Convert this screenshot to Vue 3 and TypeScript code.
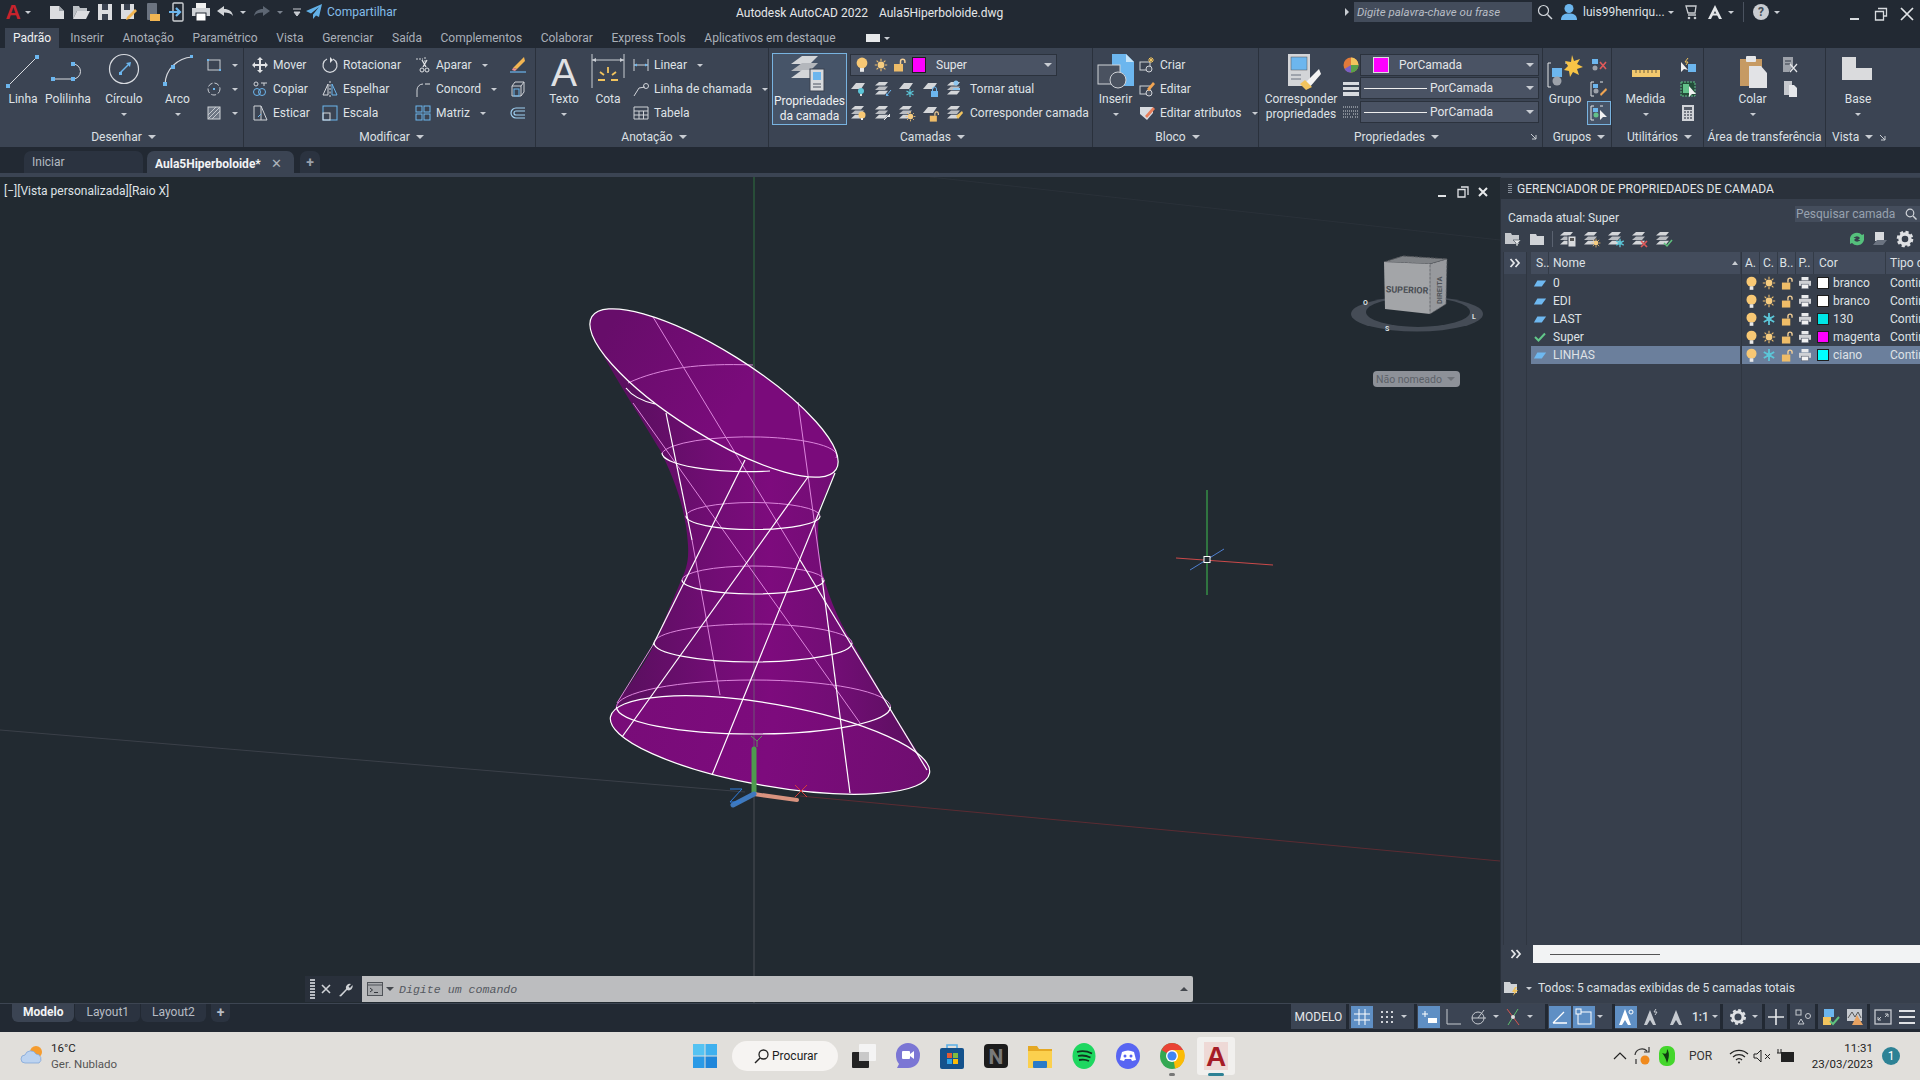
<script setup lang="ts">
const ribbonTabs = ['Inserir', 'Anotação', 'Paramétrico', 'Vista', 'Gerenciar', 'Saída', 'Complementos', 'Colaborar', 'Express Tools', 'Aplicativos em destaque']

const layers = [
  { name: '0', ok: false, frozen: false, color: '#ffffff', colorName: 'branco', active: false },
  { name: 'EDI', ok: false, frozen: false, color: '#ffffff', colorName: 'branco', active: false },
  { name: 'LAST', ok: false, frozen: true, color: '#00e6e6', colorName: '130', active: false },
  { name: 'Super', ok: true, frozen: false, color: '#ff00ff', colorName: 'magenta', active: false },
  { name: 'LINHAS', ok: false, frozen: true, color: '#00ffff', colorName: 'ciano', active: true },
]

interface Ring { cx: number; cy: number; rx: number; ry: number }
const rings: Ring[] = [
  { cx: 753.5, cy: 707, rx: 137, ry: 27 },
  { cx: 753, cy: 643, rx: 99, ry: 19 },
  { cx: 753, cy: 580, rx: 71, ry: 14 },
  { cx: 753, cy: 516, rx: 67, ry: 13.5 },
]
const upper = (r: Ring) => `M${r.cx - r.rx},${r.cy} A${r.rx},${r.ry} 0 0 1 ${r.cx + r.rx},${r.cy}`
const lower = (r: Ring) => `M${r.cx - r.rx},${r.cy} A${r.rx},${r.ry} 0 0 0 ${r.cx + r.rx},${r.cy}`

const rulingsPink = [
  [798, 402, 822, 578], [692, 540, 720, 695], [653, 645, 617, 703], [633, 403, 860, 723], [653, 317, 800, 560],
]
const rulingsWhite = [
  [822, 578, 850, 793], [712, 775, 835, 473], [622, 737, 808, 477], [745, 460, 653, 645], [666, 413, 692, 540], [800, 560, 927, 770],
]
</script>

<template>
  <svg class="sprite">
    <symbol id="sheets" viewBox="0 0 18 18">
      <path d="M5 2h9l-3 3.6H1z" fill="#d4d6d9" /><path d="M5 6.4h9l-3 3.6H1z" fill="#b9bcc1" /><path d="M5 10.8h9l-3 3.6H1z" fill="#d4d6d9" />
    </symbol>
    <symbol id="sheet" viewBox="0 0 18 18"><path d="M6 3h9l-4 6H1z" fill="#d4d6d9" /></symbol>
    <symbol id="bulb" viewBox="0 0 14 16">
      <circle cx="7" cy="6" r="5.4" fill="#f8c874" /><rect x="5" y="11" width="4" height="3.8" fill="#e8e8e8" />
    </symbol>
    <symbol id="sun" viewBox="0 0 14 14">
      <circle cx="7" cy="7" r="3.4" fill="#f6cc80" />
      <path d="M7 .8v2.2M7 11v2.2M.8 7H3M11 7h2.2M2.6 2.6l1.6 1.6M9.8 9.8l1.6 1.6M11.4 2.6 9.8 4.2M4.2 9.8l-1.6 1.6" stroke="#f0c070" stroke-width="1.1" />
    </symbol>
    <symbol id="lock" viewBox="0 0 14 14">
      <rect x="1" y="6" width="9" height="7.500" fill="#eebc68" /><path d="M7.500 6V3.400a2.200 2.200 0 0 1 4.400 0V5" fill="none" stroke="#f3cf96" stroke-width="1.500" />
    </symbol>
    <symbol id="printer" viewBox="0 0 14 14">
      <rect x="3.5" y="1" width="7" height="3.4" fill="#e9eaec" /><rect x="1" y="4.8" width="12" height="5" fill="#cfd1d5" /><rect x="3.5" y="8.2" width="7" height="4.6" fill="#f1f1f2" stroke="#5a6270" stroke-width=".6" />
    </symbol>
    <symbol id="para" viewBox="0 0 16 10"><path d="M5 1.5h10l-5 7H1z" fill="#6eb8f0" /></symbol>
    <symbol id="snow" viewBox="0 0 14 14">
      <path d="M7 1v12M1.800 4l10.400 6M12.200 4 1.800 10" stroke="#5cc6d8" stroke-width="1.800" /><circle cx="7" cy="7" r="2.400" fill="#5cc6d8" />
    </symbol>
    <symbol id="chev" viewBox="0 0 12 10"><path d="M1.500 1 5 5 1.500 9M6.500 1 10 5 6.500 9" fill="none" stroke="#e4e6e9" stroke-width="1.800" /></symbol>
  </svg>

  <div class="app">
    <!-- barra de titulo -->
    <header class="titlebar">
      <div class="qat">
        <span class="logo">A</span>
        <i class="caret qat-caret"></i>
        <div class="qat-icons">
          <svg width="24" height="24" viewBox="0 0 24 24"><path d="M5 6h9l5 5v8H5z" fill="#dcdde0" /><path d="M14 6l5 5h-5z" fill="#9ea3aa" /></svg>
          <svg width="24" height="24" viewBox="0 0 24 24"><path d="M4 6h6l1 2h7v3H8l-4 8z" fill="#bcc0c5" /><path d="M8 11h13l-4 8H4z" fill="#dcdde0" /></svg>
          <svg width="24" height="24" viewBox="0 0 24 24"><path d="M5 4h14v16H5z" fill="#dcdde0" /><rect x="9" y="4" width="6" height="6" fill="#3a4250" /><rect x="9" y="14" width="6" height="6" fill="#3a4250" /></svg>
          <svg width="24" height="24" viewBox="0 0 24 24"><path d="M4 4h13v15H4z" fill="#dcdde0" /><rect x="7" y="4" width="6" height="6" fill="#3a4250" /><path d="M20 11l-8 8-3 1 1-3 8-8z" fill="#f2b552" /></svg>
          <svg width="24" height="24" viewBox="0 0 24 24"><rect x="6" y="3" width="10" height="17" rx="1" fill="#6b7380" /><rect x="9" y="14" width="10" height="7" fill="#f2b552" /></svg>
          <svg width="24" height="24" viewBox="0 0 24 24"><rect x="8" y="3" width="10" height="18" rx="1" fill="none" stroke="#cdd0d4" stroke-width="1.400" /><path d="M4 12h10M11 8l4 4-4 4" fill="none" stroke="#6cb6ee" stroke-width="2.200" /></svg>
          <svg width="24" height="24" viewBox="0 0 24 24"><rect x="7" y="3" width="10" height="5" fill="#f0f0f0" /><rect x="3" y="8" width="18" height="8" fill="#cfd2d6" /><rect x="7" y="13" width="10" height="8" fill="#fff" stroke="#222933" /></svg>
          <svg width="24" height="24" viewBox="0 0 24 24"><path d="M4 11l7-5v3c5 0 8 2 9 7-2-3-5-3.500-9-3.500V16z" fill="#d2d5d9" /></svg>
          <i class="caret"></i>
          <svg class="redo" width="24" height="24" viewBox="0 0 24 24"><path d="M20 11l-7-5v3c-5 0-8 2-9 7 2-3 5-3.500 9-3.500V16z" fill="#5d6673" /></svg>
          <i class="caret dim"></i>
          <svg class="qat-menu" width="12" height="12" viewBox="0 0 12 12"><path d="M2 3h8M3 6h6l-3 4z" stroke="#c8ccd2" fill="#c8ccd2" /></svg>
        </div>
        <svg class="share" width="18" height="18" viewBox="0 0 18 18"><path d="M17 1 1 8l5 2.500L14 4l-6 7.500V16l3-3.500 3 1.500z" fill="#62b1e8" /></svg>
        <span class="share-text">Compartilhar</span>
      </div>
      <div class="doc-title"><span>Autodesk AutoCAD 2022</span><span>Aula5Hiperboloide.dwg</span></div>
      <div class="title-right">
        <i class="caret side"></i>
        <div class="search-box">Digite palavra-chave ou frase</div>
        <svg width="16" height="16" viewBox="0 0 16 16"><circle cx="6.500" cy="6.500" r="5" fill="none" stroke="#d2d6db" stroke-width="1.200" /><path d="M10.500 10.500 15 15" stroke="#d2d6db" stroke-width="1.500" /></svg>
        <svg width="18" height="18" viewBox="0 0 18 18"><circle cx="9" cy="5.500" r="4.500" fill="#6cb6ee" /><path d="M1 17c0-5 3-6.500 8-6.500s8 1.500 8 6.500z" fill="#6cb6ee" /></svg>
        <span class="user">luis99henriqu...</span>
        <i class="caret"></i>
        <svg class="cart" width="14" height="16" viewBox="0 0 14 16"><path d="M1 2h10l-1 7H3zM3 11h8" fill="none" stroke="#c9ccd1" stroke-width="1.300" /><circle cx="4" cy="14" r="1.300" fill="#c9ccd1" /><circle cx="10" cy="14" r="1.300" fill="#c9ccd1" /></svg>
        <svg width="16" height="16" viewBox="0 0 16 16"><path d="M8 1 1 15h3l4-8 4 8h3z" fill="#e3e5e8" /><rect x="4" y="9.500" width="8" height="2" fill="#e3e5e8" /></svg>
        <i class="caret"></i>
        <b class="sep"></b>
        <span class="help">?</span>
        <i class="caret"></i>
        <div class="win-btns">
          <svg width="14" height="14" viewBox="0 0 14 14"><path d="M2 12h9" stroke="#d8dbdf" stroke-width="2" /></svg>
          <svg width="14" height="14" viewBox="0 0 14 14"><path d="M4 1.500h8.500V9H9.500M1.500 4.500h8V13h-8z" fill="none" stroke="#d8dbdf" stroke-width="1.300" /></svg>
          <svg width="14" height="14" viewBox="0 0 14 14"><path d="m1 1 12 12M13 1 1 13" stroke="#e1e4e7" stroke-width="1.700" /></svg>
        </div>
      </div>
    </header>

    <!-- abas da faixa de opcoes -->
    <nav class="ribbon-tabs">
      <span class="rtab active">Padrão</span>
      <span v-for="t in ribbonTabs" :key="t" class="rtab">{{ t }}</span>
      <span class="rtab-pick"><b></b><i class="caret"></i></span>
    </nav>

    <!-- faixa de opcoes -->
    <section class="ribbon">
      <div class="panel p-draw">
        <div class="panel-body">
          <div class="big">
            <svg width="40" height="38" viewBox="0 0 40 38"><path d="M5 33 34 4" stroke="#d8dbe0" /><rect x="3" y="31" width="4" height="4" fill="#6cb6ee" /><rect x="32" y="2" width="4" height="4" fill="#6cb6ee" /></svg>
            <span>Linha</span>
          </div>
          <div class="big">
            <svg width="40" height="38" viewBox="0 0 40 38"><path d="M5 26h20a7.500 7.500 0 0 0 0-15" fill="none" stroke="#d8dbe0" /><rect x="3" y="24" width="4" height="4" fill="#6cb6ee" /><rect x="23" y="24" width="4" height="4" fill="#6cb6ee" /><rect x="23" y="9" width="4" height="4" fill="#6cb6ee" /></svg>
            <span>Polilinha</span>
          </div>
          <div class="big">
            <svg width="40" height="38" viewBox="0 0 40 38"><circle cx="20" cy="16" r="14.500" fill="none" stroke="#d8dbe0" stroke-width="1.200" /><path d="M16 20l8-8" stroke="#6cb6ee" stroke-width="1.500" /><rect x="15" y="19" width="3" height="3" fill="#6cb6ee" /><path d="M27 9l-5 1 4 4z" fill="#6cb6ee" /></svg>
            <span>Círculo</span>
            <i class="caret"></i>
          </div>
          <div class="big">
            <svg width="40" height="38" viewBox="0 0 40 38"><path d="M7 32C7 16 20 5 34 4" fill="none" stroke="#d8dbe0" stroke-width="1.200" /><rect x="5" y="29" width="4" height="4" fill="#6cb6ee" /><rect x="13" y="12" width="4" height="4" fill="#6cb6ee" /><rect x="32" y="2" width="3" height="3" fill="#6cb6ee" /></svg>
            <span>Arco</span>
            <i class="caret"></i>
          </div>
          <div class="col draw-small">
            <div class="tool"><svg width="18" height="18" viewBox="0 0 18 18"><rect x="3" y="4" width="12" height="10" fill="none" stroke="#c9cdd3" /><rect x="2" y="3" width="2" height="2" fill="#6cb6ee" /><rect x="14" y="13" width="2" height="2" fill="#6cb6ee" /></svg><i class="caret"></i></div>
            <div class="tool"><svg width="18" height="18" viewBox="0 0 18 18"><circle cx="9" cy="9" r="6" fill="none" stroke="#c9cdd3" stroke-dasharray="5 2" /><rect x="8" y="8" width="2" height="2" fill="#6cb6ee" /></svg><i class="caret"></i></div>
            <div class="tool"><svg width="18" height="18" viewBox="0 0 18 18"><rect x="3" y="3" width="12" height="12" fill="#6d7684" stroke="#d0d3d8" /><path d="M3 11l8-8M3 15 15 3M7 15l8-8" stroke="#c6cad0" /></svg><i class="caret"></i></div>
          </div>
        </div>
        <div class="panel-title">Desenhar <i class="caret"></i></div>
      </div>

      <div class="panel p-mod">
        <div class="panel-body">
          <div class="col">
            <div class="tool"><svg width="18" height="18" viewBox="0 0 18 18"><path d="M9 1l3 3H10v4h4V6l3 3-3 3v-2h-4v4h2l-3 3-3-3h2v-4H4v2L1 9l3-3v2h4V4H6z" fill="#e1e3e6" /></svg>Mover</div>
            <div class="tool"><svg width="18" height="18" viewBox="0 0 18 18"><circle cx="6" cy="12" r="3.500" fill="none" stroke="#6cb6ee" /><circle cx="11" cy="12" r="3.500" fill="none" stroke="#6cb6ee" /><circle cx="5" cy="4" r="2" fill="none" stroke="#d0d3d8" /><path d="M10 3h6M13 6V3" stroke="#d0d3d8" /></svg>Copiar</div>
            <div class="tool"><svg width="18" height="18" viewBox="0 0 18 18"><path d="M3 2h7v14H3zM10 2l6 14H10" fill="none" stroke="#d0d3d8" /><path d="M7 13l3-3" stroke="#6cb6ee" /></svg>Esticar</div>
          </div>
          <div class="col">
            <div class="tool"><svg width="18" height="18" viewBox="0 0 18 18"><path d="M12 3a7 7 0 1 1-6 0" fill="none" stroke="#d8dbe0" stroke-width="1.200" /><path d="M9 1v6l3-3z" fill="#e1e3e6" /></svg>Rotacionar</div>
            <div class="tool"><svg width="18" height="18" viewBox="0 0 18 18"><path d="M9 1v16" stroke="#d8dbe0" stroke-dasharray="2 1.500" /><path d="M7 4 2 15h5z" fill="none" stroke="#d8dbe0" /><path d="M11 4l5 11h-5z" fill="none" stroke="#6cb6ee" /></svg>Espelhar</div>
            <div class="tool"><svg width="18" height="18" viewBox="0 0 18 18"><rect x="2" y="2" width="14" height="14" fill="none" stroke="#6cb6ee" /><rect x="2" y="9" width="7" height="7" fill="none" stroke="#d8dbe0" /></svg>Escala</div>
          </div>
          <div class="col">
            <div class="tool"><svg width="18" height="18" viewBox="0 0 18 18"><path d="M2 3h7M11 1v5" stroke="#d0d3d8" stroke-dasharray="2 1" /><path d="M8 4l4 7M13 4l-4 7" stroke="#e1e3e6" stroke-width="1.300" /><circle cx="8" cy="14" r="2" fill="none" stroke="#e1e3e6" /><circle cx="13" cy="14" r="2" fill="none" stroke="#e1e3e6" /></svg>Aparar <i class="caret"></i></div>
            <div class="tool"><svg width="18" height="18" viewBox="0 0 18 18"><path d="M3 17V10a6 6 0 0 1 6-6" fill="none" stroke="#d0d3d8" /><path d="M11 4h5" stroke="#e1e3e6" /></svg>Concord <i class="caret"></i></div>
            <div class="tool"><svg width="18" height="18" viewBox="0 0 18 18"><rect x="2" y="2" width="6" height="6" fill="none" stroke="#6cb6ee" /><rect x="10" y="2" width="6" height="6" fill="none" stroke="#6cb6ee" /><rect x="2" y="10" width="6" height="6" fill="none" stroke="#6cb6ee" /><rect x="10" y="10" width="6" height="6" fill="none" stroke="#6cb6ee" /></svg>Matriz <i class="caret"></i></div>
          </div>
          <div class="col">
            <div class="tool"><svg width="18" height="18" viewBox="0 0 18 18"><path d="M15 1l1 4-8 8-4-1z" fill="#f2b552" /><path d="M4 12l4 1-2 2-3-1z" fill="#ef8f8f" /><path d="M1 16h16" stroke="#6cb6ee" stroke-width="1.200" /></svg></div>
            <div class="tool"><svg width="18" height="18" viewBox="0 0 18 18"><path d="M3 6h9v10H3zM3 6l3-4h9v10l-3 4M12 6l3-4" fill="none" stroke="#d0d3d8" /><rect x="5" y="9" width="5" height="7" fill="none" stroke="#6cb6ee" /></svg></div>
            <div class="tool"><svg width="18" height="18" viewBox="0 0 18 18"><path d="M16 4H7a5 5 0 0 0 0 10h9M16 7H7a2 2 0 0 0 0 4h9" fill="none" stroke="#9fd0f2" stroke-width="1.200" /></svg></div>
          </div>
        </div>
        <div class="panel-title">Modificar <i class="caret"></i></div>
      </div>

      <div class="panel p-annot">
        <div class="panel-body">
          <div class="big">
            <svg width="40" height="38" viewBox="0 0 40 38"><text x="20" y="33" text-anchor="middle" font-family="Liberation Sans" font-size="39" fill="#e0e1e3">A</text></svg>
            <span>Texto</span>
            <i class="caret"></i>
          </div>
          <div class="big">
            <svg width="34" height="38" viewBox="0 0 34 38"><path d="M1 1v34M33 1v24M1 7h32" stroke="#c9cdd3" /><path d="M1 7l4-2v4zM33 7l-4-2v4z" fill="#c9cdd3" /><path d="M17 14v6M9 19l4 3M25 19l-4 3M7 27h7M20 27h7" stroke="#f2c45e" stroke-width="1.800" /></svg>
            <span>Cota</span>
          </div>
          <div class="col">
            <div class="tool"><svg width="18" height="18" viewBox="0 0 18 18"><path d="M2 3v12M16 3v12M2 9h14" stroke="#d0d3d8" /><path d="M2 9l3-1.500v3zM16 9l-3-1.500v3z" fill="#6cb6ee" /></svg>Linear <i class="caret"></i></div>
            <div class="tool"><svg width="18" height="18" viewBox="0 0 18 18"><path d="M2 16l5-8 6-1" fill="none" stroke="#d0d3d8" /><circle cx="14" cy="6" r="2.500" fill="none" stroke="#d0d3d8" /></svg>Linha de chamada <i class="caret"></i></div>
            <div class="tool"><svg width="18" height="18" viewBox="0 0 18 18"><path d="M2 3h14v12H2zM2 7h14M2 11h14M7 7v8M11.500 7v8" fill="none" stroke="#d0d3d8" /></svg>Tabela</div>
          </div>
        </div>
        <div class="panel-title">Anotação <i class="caret"></i></div>
      </div>

      <div class="panel p-layer">
        <div class="panel-body">
          <div class="big layer-btn">
            <svg width="40" height="38" viewBox="0 0 40 38"><path d="M12 1h16l-8 8H1z" fill="#d4d6d9" /><path d="M12 8h16l-8 8H1z" fill="#b4b7bc" /><path d="M12 15h16l-8 8H1z" fill="#d4d6d9" /><rect x="20" y="14" width="14" height="22" fill="#d8dadd" stroke="#3a4250" /><rect x="23" y="17" width="8" height="8" fill="#6cb6ee" /><path d="M23 29h8M23 32h8" stroke="#4a5260" /></svg>
            <span>Propriedades<br />da camada</span>
          </div>
          <div class="col layer-col">
            <div class="combo layer-combo">
              <svg width="14" height="16"><use href="#bulb" /></svg>
              <svg width="14" height="14"><use href="#sun" /></svg>
              <svg width="14" height="14"><use href="#lock" /></svg>
              <b class="swatch" style="background:#ff00ff"></b>
              <span>Super</span>
              <i class="caret combo-caret"></i>
            </div>
            <div class="tool layer-row">
              <svg width="18" height="18" viewBox="0 0 18 18"><use href="#sheet" width="18" height="18" /><circle cx="11" cy="11" r="3" fill="#5cc6d8" /><rect x="10" y="14" width="2" height="2" fill="#ddd" /></svg>
              <svg width="18" height="18" viewBox="0 0 18 18"><use href="#sheets" width="18" height="18" /><path d="M17 10l-5 6" stroke="#6cb6ee" /><path d="M12 13v3h3z" fill="#6cb6ee" /></svg>
              <svg width="18" height="18" viewBox="0 0 18 18"><use href="#sheet" width="18" height="18" /><path d="M12 9v8M8.500 11l7 4M15.500 11l-7 4" stroke="#5cc6d8" stroke-width="1.200" /></svg>
              <svg width="18" height="18" viewBox="0 0 18 18"><use href="#sheet" width="18" height="18" /><rect x="9" y="11" width="7" height="6" fill="#6cb6ee" /><path d="M10.500 11V9a2 2 0 0 1 4 0v2" fill="none" stroke="#6cb6ee" /></svg>
              <svg width="18" height="18" viewBox="0 0 18 18"><use href="#sheets" width="18" height="18" /><circle cx="10" cy="3" r="2.500" fill="#8ec6f0" /><path d="M7 9h7" stroke="#8ec6f0" stroke-width="2" /></svg>
              Tornar atual
            </div>
            <div class="tool layer-row">
              <svg width="18" height="18" viewBox="0 0 18 18"><use href="#sheets" width="18" height="18" /><circle cx="12" cy="11" r="3.500" fill="#f8c874" /><rect x="11" y="14" width="2" height="2" fill="#eee" /></svg>
              <svg width="18" height="18" viewBox="0 0 18 18"><use href="#sheets" width="18" height="18" /><path d="M10 16l6-6" stroke="#e6e8ea" /><path d="M16 10v3h-3z" fill="#e6e8ea" /></svg>
              <svg width="18" height="18" viewBox="0 0 18 18"><use href="#sheets" width="18" height="18" /><use href="#sun" x="7" y="7" width="11" height="11" /></svg>
              <svg width="18" height="18" viewBox="0 0 18 18"><use href="#sheet" width="18" height="18" /><use href="#lock" x="7" y="7" width="11" height="11" /></svg>
              <svg width="18" height="18" viewBox="0 0 18 18"><use href="#sheets" width="18" height="18" /><path d="M10 12l6-5 1 2-5 6z" fill="#f2c45e" /></svg>
              Corresponder camada
            </div>
          </div>
        </div>
        <div class="panel-title">Camadas <i class="caret"></i></div>
      </div>

      <div class="panel p-block">
        <div class="panel-body">
          <div class="big">
            <svg width="40" height="38" viewBox="0 0 40 38"><path d="M16 1h14l8 8v24H16z" fill="#6cb6ee" /><path d="M30 1l8 8h-8z" fill="#c6e4f8" /><rect x="2" y="12" width="22" height="19" fill="#4a5260" stroke="#d0d3d8" /><circle cx="22" cy="27" r="8" fill="#4a5260" stroke="#d0d3d8" /></svg>
            <span>Inserir</span>
            <i class="caret"></i>
          </div>
          <div class="col">
            <div class="tool"><svg width="18" height="18" viewBox="0 0 18 18"><rect x="2" y="6" width="10" height="8" fill="none" stroke="#d0d3d8" /><circle cx="11" cy="13" r="3" fill="#4a5260" stroke="#d0d3d8" /><path d="M13 1v6M10 4h6M11 2l4 4M15 2l-4 4" stroke="#f2c45e" /></svg>Criar</div>
            <div class="tool"><svg width="18" height="18" viewBox="0 0 18 18"><rect x="2" y="6" width="10" height="8" fill="none" stroke="#d0d3d8" /><circle cx="11" cy="13" r="3" fill="#4a5260" stroke="#d0d3d8" /><path d="M9 9l6-7 2 2-6 7z" fill="#f2a552" /></svg>Editar</div>
            <div class="tool"><svg width="18" height="18" viewBox="0 0 18 18"><path d="M2 3h13v6l-6 7-7-6z" fill="#d8dbe0" /><path d="M7 12l8-9 2 2-8 9z" fill="#e87e5a" /></svg>Editar atributos <i class="caret"></i></div>
          </div>
        </div>
        <div class="panel-title">Bloco <i class="caret"></i></div>
      </div>

      <div class="panel p-props">
        <div class="panel-body">
          <div class="big">
            <svg width="40" height="38" viewBox="0 0 40 38"><rect x="7" y="1" width="22" height="32" fill="#d3d5d8" /><rect x="10" y="4" width="16" height="13" fill="#6cb6ee" stroke="#555" stroke-width=".5" /><path d="M10 22h10M10 26h10" stroke="#6a7280" /><path d="M38 16 24 30l4 5 12-14z" fill="#f4f4f4" /><path d="M24 27l7 7-6 3-6-6z" fill="#f2c45e" /></svg>
            <span>Corresponder<br />propriedades</span>
          </div>
          <div class="col prop-icons">
            <div class="tool"><svg width="16" height="18" viewBox="0 0 16 18"><circle cx="8" cy="9" r="7.500" fill="#e07a3a" /><path d="M8 9V1.500a7.500 7.500 0 0 1 7.500 7.500z" fill="#f2c45e" /><path d="M8 9h7.500A7.500 7.500 0 0 1 8 16.500z" fill="#58a14a" /><path d="M8 9v7.500A7.500 7.500 0 0 1 1.500 13z" fill="#7a5fc6" /></svg></div>
            <div class="tool"><svg width="16" height="18" viewBox="0 0 16 18"><path d="M0 2h16v3H0zM0 7h16v3H0zM0 12h16v4H0z" fill="#d8dbdf" /></svg></div>
            <div class="tool"><svg width="16" height="18" viewBox="0 0 16 18"><path d="M0 3h16M0 7h16M0 10h8M10 10h6M0 13h5M7 13h3M12 13h4" stroke="#d0d3d8" stroke-dasharray="1 1" /></svg></div>
          </div>
          <div class="col prop-combos">
            <div class="combo"><b class="swatch big-swatch"></b><span>PorCamada</span><i class="caret combo-caret"></i></div>
            <div class="combo"><b class="rule"></b><span>PorCamada</span><i class="caret combo-caret"></i></div>
            <div class="combo"><b class="rule"></b><span>PorCamada</span><i class="caret combo-caret"></i></div>
          </div>
        </div>
        <div class="panel-title title-props">Propriedades <i class="caret"></i><svg class="expand" width="7" height="7" viewBox="0 0 7 7"><path d="M1 1l5 5M6 2v4H2" fill="none" stroke="#c9cdd3" /></svg></div>
      </div>

      <div class="panel p-group">
        <div class="panel-body">
          <div class="big">
            <svg width="40" height="38" viewBox="0 0 40 38"><path d="M6 10H3v24h3M20 10h3" fill="none" stroke="#e1e3e6" /><rect x="7" y="15" width="10" height="9" fill="#6cb6ee" /><circle cx="12" cy="28" r="4.500" fill="#9da2aa" /><path d="M27 2l2 6 6-2-3 5 6 3-6 2 2 6-6-3-3 5-1-6-5-1 4-4-3-5 6 1z" fill="#f8c446" /></svg>
            <span>Grupo</span>
          </div>
          <div class="col">
            <div class="tool"><svg width="18" height="18" viewBox="0 0 18 18"><rect x="2" y="3" width="6" height="5" fill="#6cb6ee" /><circle cx="5" cy="12" r="2.500" fill="#9da2aa" /><path d="M10 6l6 7M16 6l-6 7" stroke="#e05a5a" stroke-width="1.600" /></svg></div>
            <div class="tool"><svg width="18" height="18" viewBox="0 0 18 18"><path d="M4 2H1v14h3M10 2h3" fill="none" stroke="#e1e3e6" /><rect x="3" y="4" width="5" height="4" fill="#6cb6ee" /><circle cx="6" cy="11" r="2.500" fill="#9da2aa" /><path d="M10 14l6-6 1 2-6 6z" fill="#f2a552" /></svg></div>
            <div class="tool boxed"><svg width="18" height="18" viewBox="0 0 18 18"><path d="M4 2H1v14h3M10 2h3" fill="none" stroke="#e1e3e6" /><rect x="3" y="4" width="5" height="4" fill="#6cb6ee" /><circle cx="6" cy="11" r="2.500" fill="#63c18a" /><path d="M10 6v10l3-3 4 0z" fill="#f2f2f2" /></svg></div>
          </div>
        </div>
        <div class="panel-title">Grupos <i class="caret"></i></div>
      </div>

      <div class="panel p-util">
        <div class="panel-body">
          <div class="big">
            <svg width="40" height="38" viewBox="0 0 40 38"><rect x="6" y="17" width="28" height="7" fill="#f2c96e" /><path d="M10 17v3M14 17v3M18 17v3M22 17v3M26 17v3M30 17v3" stroke="#6e6040" /></svg>
            <span>Medida</span>
            <i class="caret"></i>
          </div>
          <div class="col">
            <div class="tool"><svg width="18" height="18" viewBox="0 0 18 18"><path d="M2 6v10l3-3 4 1z" fill="#f2f2f2" /><rect x="9" y="8" width="8" height="8" fill="#6cb6ee" /><path d="M9 2l-3 4h3l-2 3" stroke="#f2c45e" fill="none" /></svg></div>
            <div class="tool"><svg width="18" height="18" viewBox="0 0 18 18"><rect x="2" y="2" width="14" height="14" fill="#244d3a" stroke="#63c18a" stroke-dasharray="2 1" /><rect x="4" y="4" width="6" height="9" fill="#63c18a" /><path d="M10 6v11l3-3 4 0z" fill="#f2f2f2" /></svg></div>
            <div class="tool"><svg width="18" height="18" viewBox="0 0 18 18"><rect x="3" y="1" width="12" height="16" fill="#d0d3d8" /><rect x="5" y="3" width="8" height="3" fill="#555c68" /><path d="M5 8h8M5 11h8M5 14h8" stroke="#555c68" stroke-width="1.600" stroke-dasharray="2 1" /></svg></div>
          </div>
        </div>
        <div class="panel-title">Utilitários <i class="caret"></i></div>
      </div>

      <div class="panel p-clip">
        <div class="panel-body">
          <div class="big">
            <svg width="40" height="38" viewBox="0 0 40 38"><rect x="7" y="6" width="22" height="27" fill="#c69a63" /><rect x="13" y="3" width="10" height="6" rx="1" fill="#e6e7e9" /><path d="M16 13h12l6 7v15H16z" fill="#e2e3e6" /></svg>
            <span>Colar</span>
            <i class="caret"></i>
          </div>
          <div class="col">
            <div class="tool"><svg width="18" height="18" viewBox="0 0 18 18"><path d="M2 1h10v9l-4 6H2z" fill="#9da2aa" /><path d="M4 5h6M4 8h5" stroke="#333b47" /><path d="M9 8l7 8M16 8l-7 8" stroke="#e5e7ea" stroke-width="1.200" /></svg></div>
            <div class="tool"><svg width="18" height="18" viewBox="0 0 18 18"><path d="M3 1h8v4H8v10H3z" fill="#c6c9ce" /><path d="M8 5h5l3 3v9H8z" fill="#e5e7ea" /></svg></div>
          </div>
        </div>
        <div class="panel-title title-nowrap">Área de transferência</div>
      </div>

      <div class="panel p-view">
        <div class="panel-body">
          <div class="big">
            <svg width="40" height="38" viewBox="0 0 40 38"><path d="M4 12h14v11h16v12H4z" transform="translate(0 -8)" fill="#dadbdd" /></svg>
            <span>Base</span>
            <i class="caret"></i>
          </div>
        </div>
        <div class="panel-title">Vista <i class="caret"></i><svg class="expand-v" width="7" height="7" viewBox="0 0 7 7"><path d="M1 1l5 5M6 2v4H2" fill="none" stroke="#c9cdd3" /></svg></div>
      </div>
    </section>

    <!-- abas de documento -->
    <div class="doc-tabs">
      <span class="dtab">Iniciar</span>
      <span class="dtab doc-current">Aula5Hiperboloide*<em>✕</em></span>
      <span class="dtab plus">+</span>
    </div>

    <main class="work">
      <div class="viewport">
        <svg class="canvas" viewBox="0 177 1500 826" width="1500" height="826">
          <defs>
            <linearGradient id="body" gradientUnits="userSpaceOnUse" x1="630" y1="0" x2="910" y2="0">
              <stop offset="0" stop-color="#5b0f60" />
              <stop offset=".3" stop-color="#710d74" />
              <stop offset=".5" stop-color="#7d0b7d" />
              <stop offset=".75" stop-color="#710e74" />
              <stop offset="1" stop-color="#5d0f61" />
            </linearGradient>
            <linearGradient id="topface" gradientUnits="userSpaceOnUse" x1="590" y1="0" x2="840" y2="0">
              <stop offset="0" stop-color="#670d6a" />
              <stop offset=".6" stop-color="#7a0b7b" />
            </linearGradient>
            <linearGradient id="base" gradientUnits="userSpaceOnUse" x1="610" y1="0" x2="930" y2="0">
              <stop offset="0" stop-color="#780c78" />
              <stop offset=".5" stop-color="#7d0b7d" />
              <stop offset="1" stop-color="#6f0e70" />
            </linearGradient>
          </defs>

          <path d="M0 730 745 792" stroke="#3b4049" />
          <path d="M800 796 1500 861" stroke="#5c2c33" />
          <path d="M930 177 1500 240" stroke="#2a3139" />

          <path d="M600 350C620 385 645 425 660 450C675 480 686 510 688 545C689 562 686 570 680 583L653 647C640 672 625 690 617 703L611 718L929 770L890 708L852 642C838 620 825 590 820 560C817 540 818 520 820 507L835 472Z" fill="url(#body)" />
          <ellipse cx="770" cy="745" rx="162" ry="41" transform="rotate(10 770 745)" fill="url(#base)" />
          <ellipse cx="714" cy="393" rx="144" ry="42" transform="rotate(32 714 393)" fill="url(#topface)" />

          <path d="M754 177V366" stroke="#2f7040" />
          <path d="M754 366V786" stroke="#6e5576" />
          <path d="M754 786V1003" stroke="#4a4f57" />

          <g fill="none" stroke="#dc85dc">
            <path v-for="(r, i) in rings" :key="'u' + i" :d="upper(r)" />
            <path d="M662 453A87 18.500 0 0 1 836 458" />
            <path d="M628 383C660 368 700 363 753 365" />
            <line v-for="(l, i) in rulingsPink" :key="'p' + i" :x1="l[0]" :y1="l[1]" :x2="l[2]" :y2="l[3]" />
          </g>
          <g fill="none" stroke="#fff" stroke-width="1.200">
            <path v-for="(r, i) in rings" :key="'l' + i" :d="lower(r)" />
            <path d="M662 453A87 18.500 0 0 0 770 471" />
            <path d="M626 388C632 396 642 401 655 404" />
            <line v-for="(l, i) in rulingsWhite" :key="'w' + i" :x1="l[0]" :y1="l[1]" :x2="l[2]" :y2="l[3]" />
            <ellipse cx="770" cy="745" rx="162" ry="41" transform="rotate(10 770 745)" />
            <ellipse cx="714" cy="393" rx="144" ry="42" transform="rotate(32 714 393)" />
          </g>

          <!-- icone UCS -->
          <path d="M754 793V749" stroke="#4f9c4f" stroke-width="5" stroke-linecap="round" />
          <path d="M754 794 797 800" stroke="#d9937f" stroke-width="4" stroke-linecap="round" />
          <path d="M754 794 733 805" stroke="#3f79bd" stroke-width="5" stroke-linecap="round" />
          <path d="M751 736l6 5 5-5M757 741v6" fill="none" stroke="#5c8f5c" />
          <path d="M795 785l12 12M807 785l-12 12" stroke="#d63b3b" />
          <path d="M730 789h12l-12 13h11" fill="none" stroke="#2f7fe0" />

          <!-- cursor -->
          <path d="M1207 490V595" stroke="#3fbf50" />
          <path d="M1176 558 1273 565" stroke="#cc4a4a" />
          <path d="M1190 570 1224 549" stroke="#4f7fd0" />
          <rect x="1204" y="556.500" width="6" height="6" fill="#222a31" stroke="#fff" />
        </svg>

        <div class="vp-label">[−][Vista personalizada][Raio X]</div>
        <div class="vp-btns">
          <svg width="12" height="12" viewBox="0 0 12 12"><path d="M1 10h8" stroke="#e0e2e5" stroke-width="2" /></svg>
          <svg width="12" height="12" viewBox="0 0 12 12"><path d="M4 1h7v8M1 3.500h7V11H1z" fill="none" stroke="#e0e2e5" stroke-width="1.300" /></svg>
          <svg width="12" height="12" viewBox="0 0 12 12"><path d="m2 2 8 8M10 2l-8 8" stroke="#e8eaec" stroke-width="2" /></svg>
        </div>

        <svg class="cube" width="130" height="90" viewBox="0 0 130 90">
          <ellipse cx="63" cy="65" rx="66" ry="17.500" fill="#454c56" />
          <ellipse cx="64" cy="63" rx="52" ry="15" fill="#222a31" />
          <path d="M30 13 49 7 93 10 76 15z" fill="#7f8286" stroke="#55585d" stroke-dasharray="3 1" />
          <path d="M30 13 76 15V65L31 60z" fill="#a3a5a8" />
          <path d="M76 15 93 10 92 55 76 65z" fill="#97999d" stroke="#55585d" stroke-dasharray="3 1" stroke-width=".7" />
          <text x="53" y="44" text-anchor="middle" font-family="Roboto" font-weight="700" font-size="9" fill="#4a4e54" transform="rotate(2 53 44)">SUPERIOR</text>
          <text transform="translate(88 55) rotate(-90)" font-family="Roboto" font-weight="700" font-size="7.500" fill="#4f5358">DIREITA</text>
          <text x="9" y="56" font-family="Roboto" font-weight="700" font-size="7" fill="#dfe1e4">O</text>
          <text x="118" y="70" font-family="Roboto" font-weight="700" font-size="7" fill="#dfe1e4">L</text>
          <text x="31" y="82" font-family="Roboto" font-weight="700" font-size="7" fill="#dfe1e4">S</text>
        </svg>
        <div class="named">Não nomeado <i class="caret"></i></div>

        <!-- linha de comando -->
        <div class="cmd">
          <div class="cmd-tools">
            <b class="grip"></b>
            <svg width="12" height="12" viewBox="0 0 12 12"><path d="m2 2 8 8M10 2l-8 8" stroke="#cfd2d6" stroke-width="1.600" /></svg>
            <svg width="16" height="16" viewBox="0 0 16 16"><path d="M2 15l7-7a4 4 0 0 1 5-5l-2.500 2.500 1.500 1.500L15.500 4a4 4 0 0 1-5.500 5l-6 6.500z" fill="#cfd2d6" /></svg>
          </div>
          <div class="cmd-input">
            <svg width="16" height="14" viewBox="0 0 16 14"><rect x=".5" y=".5" width="15" height="13" fill="#a8aaad" stroke="#4f5358" /><path d="M.5 3h15" stroke="#4f5358" /><path d="M3 6l2.500 2L3 10M7 10.500h4" fill="none" stroke="#33373c" /></svg>
            <i class="caret dark"></i>
            <span>Digite um comando</span>
            <i class="caret up dark"></i>
          </div>
        </div>
      </div>

      <!-- gerenciador de camadas -->
      <aside class="layer-panel">
        <div class="lp-title"><b class="grip small"></b>GERENCIADOR DE PROPRIEDADES DE CAMADA</div>
        <div class="lp-current">
          <span>Camada atual: Super</span>
          <div class="lp-search">Pesquisar camada
            <svg width="12" height="12" viewBox="0 0 12 12"><circle cx="5" cy="5" r="3.800" fill="none" stroke="#cfd3d8" stroke-width="1.200" /><path d="M8 8l3.500 3.500" stroke="#cfd3d8" stroke-width="1.400" /></svg>
          </div>
        </div>
        <div class="lp-tools">
          <svg width="18" height="18" viewBox="0 0 18 18"><path d="M1 3h6l1 2h7v9H1z" fill="#c4c7cc" /><path d="M9 10h8l-3 3v3h-2v-3z" fill="#e6e8ea" stroke="#373f4c" stroke-width=".6" /></svg>
          <svg width="18" height="18" viewBox="0 0 18 18"><path d="M2 4h6l1 2h7v9H2z" fill="#d0d3d7" /></svg>
          <b class="lp-sep"></b>
          <svg width="18" height="18" viewBox="0 0 18 18"><use href="#sheets" width="18" height="18" /><rect x="9" y="6" width="8" height="11" fill="#d8dadd" stroke="#373f4c" /><rect x="11" y="8" width="4" height="3" fill="#555" /></svg>
          <svg width="18" height="18" viewBox="0 0 18 18"><use href="#sheets" width="18" height="18" /><use href="#sun" x="8" y="8" width="10" height="10" /></svg>
          <svg width="18" height="18" viewBox="0 0 18 18"><use href="#sheets" width="18" height="18" /><use href="#snow" x="8" y="8" width="10" height="10" /></svg>
          <svg width="18" height="18" viewBox="0 0 18 18"><use href="#sheets" width="18" height="18" /><path d="M10 11l6 6M16 11l-6 6" stroke="#e05a5a" stroke-width="1.700" /></svg>
          <svg width="18" height="18" viewBox="0 0 18 18"><use href="#sheets" width="18" height="18" /><path d="M9 13l3 3 5-6" fill="none" stroke="#5fc27e" stroke-width="1.500" /></svg>
          <span class="lp-spacer"></span>
          <svg width="18" height="18" viewBox="0 0 18 18"><path d="M2 8a7 7 0 0 1 12-3l2-1v6h-6l2-2a4 4 0 0 0-7 1zM16 10a7 7 0 0 1-12 3l-2 1V8h6l-2 2a4 4 0 0 0 7-1z" fill="#55c07c" /></svg>
          <svg width="18" height="18" viewBox="0 0 18 18"><rect x="3" y="2" width="9" height="9" fill="#d8dadd" /><path d="M1 15l4-5h10l-4 5z" fill="#6b7380" /></svg>
          <svg width="18" height="18" viewBox="0 0 18 18"><circle cx="9" cy="9" r="5" fill="none" stroke="#dfe1e4" stroke-width="3.400" /><circle cx="9" cy="9" r="7.200" fill="none" stroke="#dfe1e4" stroke-width="2.200" stroke-dasharray="3.200 2.500" /></svg>
        </div>

        <div class="lp-table">
          <div class="lp-tree"><b><svg width="12" height="10"><use href="#chev" /></svg></b></div>
          <div class="lp-list">
            <div class="lp-head"><span class="c-s">S..</span><span class="c-name">Nome</span><i class="caret up"></i></div>
            <div v-for="l in layers" :key="l.name" class="lp-row" :class="{ sel: l.active }">
              <span class="c-s">
                <svg v-if="l.ok" width="14" height="10" viewBox="0 0 14 10"><path d="M2 5l3.500 3.500L12 1.500" fill="none" stroke="#62c88a" stroke-width="2" /></svg>
                <svg v-else width="14" height="9"><use href="#para" /></svg>
              </span>
              <span class="c-name">{{ l.name }}</span>
            </div>
          </div>
          <div class="lp-list props">
            <div class="lp-head">
              <span class="c-i">A.</span><span class="c-i">C.</span><span class="c-i">B..</span><span class="c-i">P..</span><span class="c-color">Cor</span><span class="c-type">Tipo d</span>
            </div>
            <div v-for="l in layers" :key="l.name" class="lp-row" :class="{ sel: l.active }">
              <span class="c-i"><svg width="13" height="15"><use href="#bulb" /></svg></span>
              <span class="c-i">
                <svg v-if="l.frozen" width="14" height="14"><use href="#snow" /></svg>
                <svg v-else width="14" height="14"><use href="#sun" /></svg>
              </span>
              <span class="c-i"><svg width="13" height="13"><use href="#lock" /></svg></span>
              <span class="c-i"><svg width="14" height="14"><use href="#printer" /></svg></span>
              <span class="c-color"><b class="swatch small-swatch" :style="{ background: l.color }"></b>{{ l.colorName }}</span>
              <span class="c-type">Contin</span>
            </div>
          </div>
        </div>

        <div class="lp-scroll">
          <b><svg width="12" height="10"><use href="#chev" /></svg></b>
          <div class="scroll-track"><u></u></div>
        </div>
        <div class="lp-status">
          <svg width="18" height="18" viewBox="0 0 18 18"><path d="M1 3h6l1 2h6v9H1z" fill="#d0d3d7" /><path d="M12 8l-3 5h2.500L10 17l5-6h-3l2-3z" fill="#f2c45e" /></svg>
          <i class="caret"></i>
          <span>Todos: 5 camadas exibidas de 5 camadas totais</span>
        </div>
      </aside>
    </main>

    <!-- abas de layout e barra de status -->
    <footer class="statusbar">
      <div class="layout-tabs">
        <span class="ltab ltab-on">Modelo</span>
        <span class="ltab">Layout1</span>
        <span class="ltab">Layout2</span>
        <span class="ltab add">+</span>
      </div>
      <div class="sb-items">
        <div class="sb-g g-model">MODELO</div>
        <div class="sb-g g1">
          <span class="sb on"><svg width="16" height="16" viewBox="0 0 16 16"><path d="M5 0v16M11 0v16M0 5h16M0 11h16" stroke="#fff" /></svg></span>
          <span class="sb"><svg width="14" height="14" viewBox="0 0 14 14"><path d="M1 2h12M1 7h12M1 12h12" stroke="#d0d3d8" stroke-width="2" stroke-dasharray="2 3" /></svg></span>
          <i class="caret"></i>
        </div>
        <div class="sb-g g2">
          <span class="sb on"><svg width="16" height="16" viewBox="0 0 16 16"><path d="M4 2v6M1 5h6" stroke="#fff" /><rect x="7" y="9" width="9" height="5" fill="#fff" /></svg></span>
          <span class="sb"><svg width="18" height="18" viewBox="0 0 18 18"><path d="M2 1v15h14" fill="none" stroke="#c6cad0" /></svg></span>
          <span class="sb"><svg width="16" height="16" viewBox="0 0 16 16"><circle cx="7" cy="9" r="6" fill="none" stroke="#c6cad0" /><path d="M1 9h14M7 9l6-8" stroke="#c6cad0" /></svg></span>
          <i class="caret"></i>
          <span class="sb"><svg width="16" height="18" viewBox="0 0 16 18"><path d="M2 1l12 16" stroke="#d9564f" /><path d="M13 1 3 17" stroke="#5fbf6f" /><circle cx="8" cy="9" r="2" fill="#ddd" /></svg></span>
          <i class="caret"></i>
        </div>
        <div class="sb-g g3">
          <span class="sb on"><svg width="16" height="16" viewBox="0 0 16 16"><path d="M1 14h14M1 14 12 3" stroke="#fff" stroke-width="1.300" fill="none" /></svg></span>
          <span class="sb on"><svg width="18" height="18" viewBox="0 0 18 18"><rect x="3" y="4" width="13" height="12" fill="none" stroke="#fff" /><rect x="1" y="1" width="5" height="5" fill="#5f8fc4" stroke="#fff" /></svg></span>
          <i class="caret"></i>
        </div>
        <div class="sb-g g4">
          <span class="sb on"><svg width="18" height="18" viewBox="0 0 18 18"><path d="M8 1 2 17h3l3-5 3 5h3z" fill="#fff" /><circle cx="14" cy="4" r="2" fill="none" stroke="#fff" /></svg></span>
          <span class="sb"><svg width="18" height="18" viewBox="0 0 18 18"><path d="M8 2 2 17h3l3-5 3 5h3z" fill="#c6cad0" /><path d="M14 1l-2 3h3l-2 3" stroke="#c6cad0" fill="none" /></svg></span>
          <span class="sb"><svg width="18" height="18" viewBox="0 0 18 18"><path d="M9 2 3 17h3l3-5 3 5h3z" fill="#c6cad0" /></svg></span>
          <span class="scale">1:1</span>
          <i class="caret"></i>
        </div>
        <div class="sb-g g5">
          <span class="sb"><svg width="18" height="18" viewBox="0 0 18 18"><circle cx="9" cy="9" r="5" fill="none" stroke="#dfe1e4" stroke-width="3" /><circle cx="9" cy="9" r="7" fill="none" stroke="#dfe1e4" stroke-width="2" stroke-dasharray="3 2.500" /></svg></span>
          <i class="caret"></i>
        </div>
        <div class="sb-g g6"><svg width="16" height="16" viewBox="0 0 16 16"><path d="M8 0v16M0 8h16" stroke="#e6e8ea" stroke-width="1.600" /></svg></div>
        <div class="sb-g g7"><svg width="18" height="18" viewBox="0 0 18 18"><rect x="2" y="2" width="5" height="5" fill="none" stroke="#c6cad0" /><circle cx="14" cy="8" r="2.500" fill="none" stroke="#c6cad0" /><path d="M7 11l3 5H4z" fill="none" stroke="#c6cad0" /></svg></div>
        <div class="sb-g g8">
          <svg width="18" height="18" viewBox="0 0 18 18"><rect x="2" y="1" width="10" height="8" fill="#6cb6ee" /><rect x="1" y="9" width="8" height="8" fill="#f2c45e" /><path d="M8 13l3 3 6-7" fill="none" stroke="#5fc27e" stroke-width="2" /></svg>
          <svg width="18" height="18" viewBox="0 0 18 18"><rect x="1" y="1" width="15" height="12" fill="#c6cad0" /><path d="M2 10l4-6 3 5 3-5 3 6" stroke="#555" fill="none" /><path d="M11 7l6 10H6z" fill="#e8a261" /></svg>
        </div>
        <div class="sb-g g9">
          <svg width="18" height="16" viewBox="0 0 18 16"><rect x="1" y="1" width="16" height="14" fill="none" stroke="#c6cad0" stroke-width="1.300" /><path d="M4 11l3-3M4 8v3h3M14 5l-3 3M14 8V5h-3" fill="none" stroke="#c6cad0" /></svg>
          <svg width="18" height="16" viewBox="0 0 18 16"><path d="M1 2h16M1 8h16M1 14h16" stroke="#dfe1e4" stroke-width="2" /></svg>
        </div>
      </div>
    </footer>

    <!-- barra de tarefas -->
    <div class="taskbar">
      <div class="weather">
        <svg width="26" height="26" viewBox="0 0 26 26"><circle cx="17" cy="9" r="6" fill="#f59c2e" /><path d="M6 20a4 4 0 0 1 0-8 6 6 0 0 1 11-1 5 5 0 0 1 3 9z" fill="#bcd3f0" stroke="#7aa0d6" stroke-width=".7" /></svg>
        <div><div class="w-temp">16°C</div><div class="w-sub">Ger. Nublado</div></div>
      </div>
      <div class="tb-center">
        <svg class="tb-win" width="26" height="26" viewBox="0 0 26 26"><path d="M1 1h11.500v11.500H1z" fill="#55c3f2" /><path d="M13.500 1H25v11.500H13.500z" fill="#3fb0ee" /><path d="M1 13.500h11.500V25H1z" fill="#2a9ae6" /><path d="M13.500 13.500H25V25H13.500z" fill="#1f86da" /></svg>
        <div class="tb-search">
          <svg width="15" height="15" viewBox="0 0 15 15"><circle cx="9.500" cy="5.500" r="4.500" fill="none" stroke="#222" stroke-width="1.300" /><path d="M6 9l-5 5" stroke="#222" stroke-width="1.500" /></svg>
          Procurar
        </div>
        <span class="app-ico"><svg width="26" height="26" viewBox="0 0 26 26"><rect x="8" y="1" width="17" height="17" rx="1" fill="#f4f4f4" /><rect x="1" y="9" width="17" height="16" rx="1" fill="#232323" /><rect x="8" y="9" width="10" height="9" fill="#c9c9c9" /></svg></span>
        <span class="app-ico"><svg width="26" height="28" viewBox="0 0 26 28"><path d="M13 1a12 12 0 0 1 12 12c0 8-5 13-12 13H2l2-4a13 13 0 0 1-3-9A12 12 0 0 1 13 1z" fill="#7b76d4" /><rect x="7" y="9" width="8" height="8" rx="1" fill="#fff" /><path d="M15 12l4-3v8l-4-3z" fill="#fff" /></svg></span>
        <span class="app-ico"><svg width="26" height="28" viewBox="0 0 26 28"><path d="M8 6V3h10v3" fill="none" stroke="#5bb0e8" stroke-width="1.600" /><rect x="1" y="6" width="24" height="21" rx="2" fill="#14528c" /><rect x="8" y="11" width="5" height="5" fill="#e25b33" /><rect x="14" y="11" width="5" height="5" fill="#80bb3f" /><rect x="8" y="17" width="5" height="5" fill="#30a3e6" /><rect x="14" y="17" width="5" height="5" fill="#fbbc09" /></svg></span>
        <span class="app-ico"><svg width="26" height="26" viewBox="0 0 26 26"><rect x="1" y="1" width="24" height="24" rx="4" fill="#1c1c1c" /><text x="13" y="21" text-anchor="middle" font-family="Roboto" font-weight="700" font-size="21" fill="#7a7a7a">N</text></svg></span>
        <span class="app-ico"><svg width="26" height="26" viewBox="0 0 26 26"><path d="M1 3h9l2 3h13v17H1z" fill="#e5a823" /><path d="M1 8h24v17H1z" fill="#fbd04e" /><rect x="6" y="18" width="14" height="7" rx="1" fill="#2a7bc8" /></svg></span>
        <span class="app-ico"><svg width="24" height="26" viewBox="0 0 24 26"><ellipse cx="12" cy="13" rx="11.500" ry="13" fill="#1ed760" /><path d="M5 9c5-1.500 10-1 15 1.500M6 13c4-1 8-.6 12.500 1.500M7 17c3.500-.8 7-.5 10 1" fill="none" stroke="#10331e" stroke-width="1.800" /></svg></span>
        <span class="app-ico"><svg width="24" height="26" viewBox="0 0 24 26"><ellipse cx="12" cy="13" rx="12" ry="13" fill="#5865f2" /><path d="M6 9c4-2 8-2 12 0l2 8-4 1-1-2H9l-1 2-4-1z" fill="#fff" /><circle cx="9" cy="13" r="1.500" fill="#5865f2" /><circle cx="15" cy="13" r="1.500" fill="#5865f2" /></svg></span>
        <span class="app-ico chrome"><svg width="24" height="26" viewBox="-12 -13 24 26"><ellipse rx="12" ry="13" fill="#34a853" /><path d="M0-13A12 13 0 0 1 11 6L0 0-10.500-6A12 13 0 0 1 0-13z" fill="#ea4335" /><path d="M0-6H11.500A12 13 0 0 1 3 12.600z" fill="#fbbc05" /><circle r="6" fill="#fff" /><circle r="4.600" fill="#4285f4" /></svg><u></u></span>
        <span class="app-ico acad"><svg width="24" height="28" viewBox="0 0 24 28"><rect width="24" height="28" fill="#eed9d6" /><text x="12" y="24" text-anchor="middle" font-family="Liberation Sans" font-weight="700" font-size="28" fill="#a61c27">A</text></svg><u></u></span>
      </div>
      <div class="tb-right">
        <svg class="t-chev" width="14" height="10" viewBox="0 0 14 10"><path d="M1 8l6-6 6 6" fill="none" stroke="#222" stroke-width="1.200" /></svg>
        <svg class="t-sync" width="20" height="20" viewBox="0 0 20 20"><path d="M2 9a7 7 0 0 1 12-4M16 1v5h-5M3 13v5" fill="none" stroke="#333" stroke-width="1.200" /><circle cx="12" cy="14" r="4.500" fill="#f08a1d" /></svg>
        <svg class="t-razer" width="20" height="22" viewBox="0 0 20 22"><rect x="2" y="1" width="16" height="20" rx="7" fill="#44d62c" /><path d="M10 4c3 4 2 9 0 14-1-5-4-9-5-10 3 1 5 2 5-4z" fill="#0f3b10" /></svg>
        <span class="t-lang">POR</span>
        <svg class="t-wifi" width="20" height="16" viewBox="0 0 20 16"><path d="M1 6a13 13 0 0 1 18 0M4 9a9 9 0 0 1 12 0M7 12a4 4 0 0 1 6 0" fill="none" stroke="#222" stroke-width="1.200" /><circle cx="10" cy="14.500" r="1" fill="#222" /></svg>
        <svg class="t-vol" width="20" height="16" viewBox="0 0 20 16"><path d="M2 6h3l4-4v12l-4-4H2z" fill="none" stroke="#222" /><path d="m13 6 5 5m0-5-5 5" stroke="#222" /></svg>
        <svg class="t-bat" width="20" height="16" viewBox="0 0 20 16"><rect x="5" y="4" width="13" height="10" fill="#222" /><path d="M2 1v4M5 1v4M1 5h5v3" fill="none" stroke="#222" /></svg>
        <div class="clock"><div>11:31</div><div>23/03/2023</div></div>
        <span class="badge">1</span>
      </div>
    </div>
  </div>
</template>

<style>
html, body { margin: 0; overflow: hidden; background: #222933; }
</style>

<style scoped>
.sprite { display: none; }
.app { width: 1920px; height: 1080px; display: flex; flex-direction: column; overflow: hidden; font: 12px Roboto, "Liberation Sans", sans-serif; color: #dfe2e6; background: #222933; }
svg { flex: none; display: block; overflow: visible; }
.caret { display: inline-block; flex: none; width: 0; height: 0; border-left: 3px solid transparent; border-right: 3px solid transparent; border-top: 3px solid #c9cdd3; }
.caret.up { border-top: 0; border-bottom: 4px solid #c9cdd3; }
.caret.dim { border-top-color: #7a828e; }
.caret.dark { border-top-color: #44484e; }
.caret.up.dark { border-bottom-color: #44484e; }
.caret.side { border: 0; border-top: 4px solid transparent; border-bottom: 4px solid transparent; border-left: 4px solid #c9cdd3; }

/* barra de titulo */
.titlebar { height: 23px; flex: none; display: grid; grid-template-columns: 736px 1fr auto; align-items: center; }
.qat { display: flex; align-items: center; }
.logo { width: 26px; text-align: center; font: 700 21px "Liberation Sans", sans-serif; color: #c8232c; }
.qat-caret { margin-left: -1px; }
.qat-icons { display: flex; align-items: center; margin-left: 14px; }
.qat-icons .caret { margin: 0 2px 0 3px; }
.qat-icons .redo { margin-left: 2px; }
.qat-menu { margin: 0 2px 0 6px; }
.share { margin-left: 0; }
.share-text { margin-left: 4px; color: #84bde9; }
.doc-title { display: flex; gap: 11px; color: #e4e6e9; margin-top: 2px; }
.title-right { display: flex; align-items: center; padding-right: 6px; }
.search-box { width: 178px; height: 20px; margin: 0 5px 0 5px; padding-left: 3px; box-sizing: border-box; line-height: 20px; background: #434c5b; color: #b9bec6; font-style: italic; font-size: 11.5px; }
.title-right > svg:nth-of-type(2) { margin-left: 7px; }
.user { margin: 0 5px; width: 80px; white-space: nowrap; }
.cart { margin-left: 11px; }
.title-right > svg:nth-of-type(4) { margin-left: 8px; }
.title-right > svg:nth-of-type(4) + .caret { margin-left: 5px; }
.sep { width: 1px; height: 20px; background: #4a525f; margin: 0 9px 0 9px; }
.help { width: 16px; height: 16px; border-radius: 50%; background: #c9ccd1; color: #444c58; text-align: center; line-height: 16px; font-weight: 700; margin-right: 5px; }
.win-btns { display: flex; gap: 12px; margin-left: 68px; margin-top: 3px; }

/* abas da faixa de opcoes */
.ribbon-tabs { height: 20px; flex: none; margin-top: 5px; display: flex; align-items: center; padding-left: 5px; color: #aab0b9; }
.rtab { height: 20px; line-height: 20px; padding: 0 9.3px; white-space: nowrap; }
.rtab.active { width: 54px; box-sizing: border-box; padding: 0 0 0 8px; background: #3b4453; color: #f0f2f4; margin-right: 2px; }
.rtab-pick { display: flex; align-items: center; gap: 4px; margin-left: 21px; }
.rtab-pick b { width: 14px; height: 8px; background: #e6e8ea; }

/* ribbon */
.ribbon { height: 99px; flex: none; display: flex; background: #3b4453; }
.panel { flex: none; display: flex; flex-direction: column; box-sizing: border-box; border-right: 1px solid #2a313c; position: relative; }
.panel-body { height: 79px; box-sizing: border-box; padding-top: 5px; display: grid; align-items: start; }
.panel-title { height: 20px; display: flex; align-items: center; justify-content: center; gap: 6px; padding-left: 4px; color: #dde0e4; }
.panel-title .caret { border-left-width: 4px; border-right-width: 4px; border-top-width: 4px; }
.col { display: flex; flex-direction: column; }
.tool { height: 24px; display: flex; align-items: center; gap: 4px; white-space: nowrap; }
.tool .caret { margin-left: 6px; }
.big { display: flex; flex-direction: column; align-items: center; text-align: center; line-height: 15px; white-space: nowrap; }
.big svg { margin-bottom: 1px; }
.big .caret { margin-top: 6px; }

.p-draw { width: 244px; }
.p-draw .panel-body { grid-template-columns: 46px 44px 68px 39px auto; }
.draw-small { padding-left: 8px; }
.draw-small .caret { margin-left: 5px; }
.p-mod { width: 292px; }
.p-mod .panel-body { grid-template-columns: 70px 93px 95px auto; padding-left: 7px; }
.p-annot { width: 233px; }
.p-annot .panel-body { grid-template-columns: 56px 32px auto; }
.p-annot .col { margin-left: 8px; }
.p-layer { width: 324px; }
.p-layer .panel-body { grid-template-columns: 75px auto; padding-left: 3px; }
.layer-btn { height: 72px; box-sizing: border-box; border: 1px solid #78b3e0; background: #465468; padding-top: 1px; color: #eef0f2; }
.layer-col { padding-left: 3px; }
.layer-row { gap: 6px; }
.combo { height: 22px; box-sizing: border-box; display: flex; align-items: center; position: relative; border: 1px solid #2b323d; background: #4a5364; margin-bottom: 1px; color: #e4e6e9; }
.combo-caret { position: absolute; right: 4px; top: 8px; border-left-width: 4px; border-right-width: 4px; border-top-width: 4px; }
.layer-combo { width: 207px; margin-top: 1px; padding-left: 4px; gap: 5px; margin-bottom: 1px; }
.layer-combo .swatch { width: 14px; height: 16px; }
.layer-combo span { margin-left: 5px; }
.swatch { width: 13px; height: 14px; border: 1px solid #1d1d1d; box-sizing: border-box; }
.p-block { width: 166px; }
.p-block .panel-body { grid-template-columns: 45px auto; }
.p-props { width: 284px; }
.p-props .panel-body { grid-template-columns: 84px 17px 179px; }
.prop-combos { margin-top: 1px; }
.prop-combos .combo { height: 22px; margin-bottom: 1px; }
.prop-combos .combo + .combo + .combo { margin-top: 1px; }
.big-swatch { width: 16px; height: 16px; background: #ff00ff; margin: 0 10px 0 12px; border-color: #ddd; }
.rule { width: 63px; height: 1px; background: #eee; margin: 0 3px; }
.title-props { padding-right: 12px; }
.expand { position: absolute; right: 5px; bottom: 7px; }
.p-group { width: 69px; }
.p-group .panel-body { grid-template-columns: 44px 24px; }
.p-group .tool { justify-content: center; }
.boxed { box-sizing: border-box; border: 1px solid #78b3e0; background: #465468; }
.p-util { width: 92px; }
.p-util .panel-body { grid-template-columns: 67px auto; }
.p-clip { width: 122px; }
.p-clip .panel-body { grid-template-columns: 57px auto; padding-left: 20px; }
.title-nowrap { white-space: nowrap; padding-left: 0; }
.p-view { flex: 1; border-right: 0; }
.p-view .panel-body { grid-template-columns: 64px; }
.p-view .panel-title { justify-content: flex-start; padding-left: 6px; }

/* abas de documento */
.doc-tabs { height: 30px; flex: none; box-sizing: border-box; display: flex; align-items: flex-end; padding: 0 0 4px 24px; background: linear-gradient(#222933 26px, #3b4453 26px); }
.dtab { height: 22px; box-sizing: border-box; line-height: 23px; border-radius: 7px 7px 0 0; background: #2b3340; color: #b4bac2; }
.dtab:first-child { width: 119px; padding-left: 8px; margin-right: 4px; }
.doc-current { width: 147px; padding-left: 8px; background: #3b4453; color: #f2f3f5; font-weight: 700; height: 26px; line-height: 25px; position: relative; top: 4px; }
.doc-current em { font-style: normal; font-weight: 400; margin-left: 10px; color: #aeb4bc; font-size: 13px; }
.plus { width: 20px; margin-left: 6px; text-align: center; font-weight: 700; font-size: 14px; color: #9aa1ab; }

/* area de trabalho */
.work { height: 826px; flex: none; display: flex; }
.viewport { width: 1500px; position: relative; background: #222a31; overflow: hidden; }
.canvas { position: absolute; left: 0; top: 0; }
.vp-label { position: absolute; left: 4px; top: 7px; color: #dfe2e6; }
.vp-btns { position: absolute; right: 11px; top: 9px; display: flex; gap: 8px; }
.cube { position: absolute; left: 1354px; top: 72px; }
.cube text { user-select: none; }
.named { position: absolute; left: 1373px; top: 194px; width: 87px; height: 16px; box-sizing: border-box; display: flex; align-items: center; gap: 5px; padding-left: 3px; border-radius: 4px; background: #8d9198; color: #5c6168; font-size: 10.5px; white-space: nowrap; }
.named .caret { border-top-color: #6e7278; border-left-width: 4px; border-right-width: 4px; border-top-width: 4px; }
.cmd { position: absolute; left: 305px; bottom: 1px; width: 888px; height: 26px; display: flex; }
.cmd-tools { width: 57px; display: flex; align-items: center; gap: 5px; padding-left: 5px; box-sizing: border-box; background: #29303b; }
.grip { width: 5px; height: 20px; background: repeating-linear-gradient(#b8bcc2 0 2px, transparent 2px 3px); }
.grip.small { width: 4px; height: 10px; margin-right: 5px; background: repeating-linear-gradient(#8a919c 0 1px, transparent 1px 2px); }
.cmd-input { flex: 1; display: flex; align-items: center; background: #bcbdbf; padding: 0 4px 0 5px; border-radius: 0 2px 2px 0; color: #55595f; }
.cmd-input .caret { margin-left: 3px; border-left-width: 4px; border-right-width: 4px; border-top-width: 4px; }
.cmd-input .caret.up { border-bottom-width: 4px; margin-right: 1px; }
.cmd-input span { flex: 1; margin-left: 5px; font: italic 11.6px "Liberation Mono", monospace; }

/* gerenciador */
.layer-panel { width: 420px; display: flex; flex-direction: column; box-sizing: border-box; padding: 1px 0 0 0; background: #373f4c; border-left: 1px solid #2a313b; overflow: hidden; }
.lp-title { height: 21px; flex: none; display: flex; align-items: center; padding-left: 7px; background: #2a313b; color: #e1e4e8; white-space: nowrap; }
.lp-current { height: 30px; flex: none; display: flex; justify-content: space-between; align-items: center; padding-left: 7px; }
.lp-search { width: 125px; height: 16px; flex: none; box-sizing: border-box; display: flex; justify-content: space-between; align-items: center; padding: 0 3px 0 1px; background: #444d5c; color: #98a2af; }
.lp-current > span { margin-top: 8px; }
.lp-tools { height: 20px; flex: none; display: flex; align-items: center; gap: 6px; padding: 0 6px 0 3px; }
.lp-sep { width: 1px; height: 16px; background: #5a6270; }
.lp-spacer { flex: 1; }
.lp-table { flex: 1; min-height: 0; display: flex; margin-top: 3px; }
.lp-tree { width: 24px; flex: none; margin-left: 2px; border: 1px solid #2f3641; border-width: 0 1px 0 1px; box-sizing: border-box; }
.lp-tree b { height: 22px; display: flex; align-items: center; justify-content: center; background: #3f4858; }
.lp-list { width: 209px; flex: none; margin-left: 4px; }
.lp-list.props { flex: 1; width: auto; margin-left: 1px; border-left: 1px solid #2f3641; }
.lp-head { height: 22px; display: flex; align-items: center; position: relative; background: #434c5c; color: #dfe2e6; }
.lp-head .caret { position: absolute; right: 2px; top: 9px; }
.lp-row { height: 18px; display: flex; align-items: center; color: #dfe2e6; }
.lp-row.sel { background: #6b7f9c; }
.c-s { width: 18px; flex: none; padding-left: 2px; box-sizing: border-box; }
.lp-head .c-s { border-right: 1px solid #333b47; line-height: 22px; padding-left: 5px; }
.c-name { padding-left: 4px; }
.c-i { width: 18px; flex: none; display: flex; justify-content: center; box-sizing: border-box; }
.lp-head .c-i { border-right: 1px solid #333b47; line-height: 22px; height: 22px; }
.c-color { width: 72px; flex: none; display: flex; align-items: center; gap: 4px; padding-left: 3px; box-sizing: border-box; white-space: nowrap; }
.lp-head .c-color { border-right: 1px solid #333b47; height: 22px; padding-left: 5px; }
.c-type { padding-left: 4px; white-space: nowrap; }
.small-swatch { width: 12px; height: 12px; }
.lp-scroll { height: 18px; flex: none; display: flex; align-items: center; padding-left: 3px; }
.lp-scroll b { width: 24px; flex: none; display: flex; justify-content: center; }
.scroll-track { flex: 1; height: 18px; margin-left: 5px; background: #f2f3f4; display: flex; align-items: center; padding-left: 17px; }
.scroll-track u { width: 110px; height: 1px; background: #555; }
.lp-status { height: 40px; flex: none; display: flex; align-items: center; gap: 5px; padding: 10px 0 0 2px; box-sizing: border-box; }
.lp-status span { margin-left: 1px; }

/* status */
.statusbar { height: 29px; flex: none; box-sizing: border-box; display: flex; justify-content: space-between; border-top: 1px solid #3d4552; }
.layout-tabs { display: flex; align-items: flex-start; padding: 0 0 0 12px; gap: 1px; }
.ltab { height: 18px; line-height: 17px; padding: 0 11px; border-radius: 0 0 6px 6px; background: #2b3340; color: #b7bcc4; }
.ltab-on { background: #3b4453; color: #f2f3f5; font-weight: 700; }
.ltab.add { padding: 0 6px; margin-left: 4px; font-size: 14px; font-weight: 700; }
.sb-items { display: flex; align-items: center; gap: 3px; height: 25px; }
.sb-g { height: 25px; display: flex; align-items: center; box-sizing: border-box; background: #3b4453; justify-content: center; }
.g-model { width: 55px; color: #e6e8ea; }
.g1 { width: 65px; justify-content: flex-start; padding-left: 2px; gap: 3px; }
.g2 { width: 128px; justify-content: flex-start; padding-left: 1px; gap: 3px; }
.g3 { width: 64px; justify-content: flex-start; padding-left: 1px; gap: 2px; }
.g4 { width: 105px; justify-content: flex-start; gap: 3px; }
.g5 { width: 39px; gap: 3px; }
.g6 { width: 22px; }
.g7 { width: 25px; }
.g8 { width: 49px; gap: 6px; }
.g9 { width: 50px; gap: 6px; }
.sb { width: 22px; height: 22px; flex: none; display: flex; align-items: center; justify-content: center; }
.sb.on { background: #5f8fc4; }
.scale { margin-left: 2px; font-weight: 500; }

/* barra de tarefas */
.taskbar { height: 48px; flex: none; display: grid; grid-template-columns: 692px auto 1fr; align-items: center; background: #e1dfdb; color: #1d1d1d; }
.weather { display: flex; align-items: center; gap: 6px; padding-left: 19px; font-size: 11.5px; }
.w-temp { line-height: 16px; }
.w-sub { line-height: 16px; color: #555; }
.tb-center { display: flex; align-items: center; }
.tb-search { width: 106px; height: 30px; margin: 0 4px 0 14px; box-sizing: border-box; padding-left: 22px; display: flex; align-items: center; gap: 3px; border-radius: 15px; background: #f6f4f2; }
.app-ico { width: 44px; height: 38px; display: flex; align-items: center; justify-content: center; position: relative; }
.app-ico u { position: absolute; bottom: -1px; left: 50%; height: 3px; border-radius: 2px; }
.chrome u { width: 6px; margin-left: -3px; background: #777; }
.acad { width: 38px; margin-left: 3px; border-radius: 3px; background: #f1f0ee; }
.acad u { width: 16px; margin-left: -8px; background: #2d8295; }
.tb-right { display: flex; align-items: center; justify-content: flex-end; padding-right: 20px; }
.t-sync { margin-left: 6px; }
.t-razer { margin-left: 4px; }
.t-lang { width: 24px; margin: 0 16px 0 12px; color: #333; }
.t-vol { margin-left: 3px; }
.t-bat { margin-left: 4px; }
.clock { width: 66px; margin-left: 11px; text-align: right; font-size: 11.5px; line-height: 16px; }
.badge { width: 18px; height: 18px; margin-left: 9px; border-radius: 50%; background: #2d8295; color: #fff; text-align: center; line-height: 18px; }
</style>
